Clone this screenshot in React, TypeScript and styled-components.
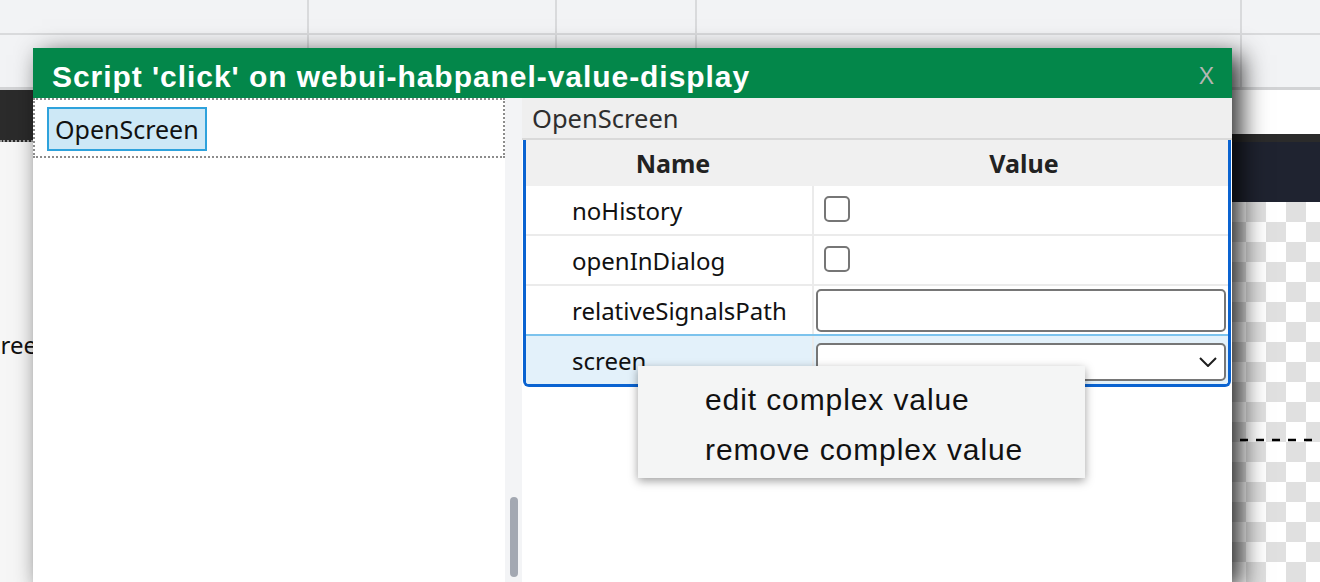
import React from "react";
import styled, { createGlobalStyle } from "styled-components";

const GlobalStyle = createGlobalStyle`
  html, body { margin: 0; padding: 0; }
  body {
    width: 1320px;
    height: 582px;
    overflow: hidden;
    background: #f6f6f6;
    font-family: "Noto Sans", "Liberation Sans", sans-serif;
  }
  * { box-sizing: border-box; }
`;

const Page = styled.div`
  position: relative;
  width: 1320px;
  height: 582px;
  overflow: hidden;
  display: flex;
  flex-direction: column;
`;

/* ---------- background application ---------- */

const TopGrid = styled.div`
  display: grid;
  grid-template-columns: 309px 248px 140px 545px 1fr;
  grid-template-rows: 35px 52px;
  background: #f2f3f5;
  border-bottom: 3px solid #d2d3d5;
  flex: none;
`;

const GridCell = styled.div<{ $top?: boolean; $last?: boolean }>`
  border-right: ${(p) => (p.$last ? "none" : "2px solid #d9dadc")};
  border-bottom: ${(p) => (p.$top ? "2px solid #d9dadc" : "none")};
`;

const Workspace = styled.div`
  flex: 1;
  display: flex;
  min-height: 0;
`;

const LeftPanel = styled.div`
  width: 640px;
  display: flex;
  flex-direction: column;
`;

const PanelBar = styled.div`
  height: 52px;
  background: #2b2b2b;
  border-bottom: 2px dotted #9a9a9a;
`;

const PanelList = styled.div`
  flex: 1;
  background: #f6f6f6;
  padding-top: 188px;
`;

const ListItem = styled.div`
  font-size: 24px;
  line-height: 30px;
  color: #111;
  margin-left: -86px;
  white-space: nowrap;
`;

const Canvas = styled.div`
  flex: 1;
  display: flex;
  flex-direction: column;
`;

const CanvasStrip = styled.div`
  height: 44px;
  background: #ffffff;
`;

const CanvasBar = styled.div`
  height: 68px;
  background: #1f2330;
  border-top: 8px solid #2b2b2b;
`;

const Checker = styled.div`
  position: relative;
  flex: 1;
  background: repeating-conic-gradient(#e0e0e0 0 25%, #ffffff 0 50%) 26px 0 / 40px 40px;
`;

const SelectionEdge = styled.svg`
  position: absolute;
  left: 440px;
  top: 236px;
`;

/* ---------- dialog ---------- */

const Dialog = styled.div`
  position: absolute;
  left: 33px;
  top: 48px;
  width: 1199px;
  height: 534px;
  display: flex;
  flex-direction: column;
  background: #ffffff;
  box-shadow: 9px 7px 24px rgba(0, 0, 0, 0.82);
`;

const TitleBar = styled.div`
  height: 50px;
  flex: none;
  background: #03874a;
  display: flex;
  align-items: flex-start;
  justify-content: space-between;
  padding: 7px 18px 0 19px;
`;

const Title = styled.div`
  font-family: "Liberation Sans", Arial, sans-serif;
  font-weight: bold;
  font-size: 30px;
  letter-spacing: 0.95px;
  line-height: 43px;
  color: #ffffff;
  white-space: nowrap;
`;

const Close = styled.div`
  font-family: "Liberation Sans", Arial, sans-serif;
  font-size: 23px;
  line-height: 43px;
  color: #b3b6b4;
`;

const DialogBody = styled.div`
  flex: 1;
  display: flex;
  min-height: 0;
`;

const TreePane = styled.div`
  width: 472px;
  flex: none;
  background: #ffffff;
`;

const TreeRow = styled.div`
  height: 60px;
  border: 2px dotted #8c8c8c;
  padding: 7px 12px;
`;

const Chip = styled.div`
  display: inline-block;
  height: 44px;
  padding: 0 6px;
  background: #cde8f6;
  border: 2px solid #2ea2dc;
  font-size: 25px;
  line-height: 40px;
  color: #111;
`;

const ScrollTrack = styled.div`
  width: 17px;
  flex: none;
  background: #f3f4f6;
  display: flex;
  flex-direction: column;
  justify-content: flex-end;
  align-items: center;
  padding-bottom: 5px;
`;

const Thumb = styled.div`
  width: 8px;
  height: 80px;
  border-radius: 4px;
  background: #a3a8b2;
  margin-left: 1px;
`;

const PropsPane = styled.div`
  flex: 1;
  display: flex;
  flex-direction: column;
  background: #ffffff;
`;

const PropsHeader = styled.div`
  height: 42px;
  flex: none;
  background: #efefef;
  border-bottom: 2px solid #d9d9d9;
  padding-left: 10px;
  font-size: 25.5px;
  line-height: 40px;
  color: #2e2e2e;
`;

const Table = styled.div`
  margin: 0 1px;
  border: 3px solid #0a63d1;
  border-top: none;
  border-radius: 0 0 6px 6px;
  overflow: hidden;
`;

const HeaderRow = styled.div`
  display: grid;
  grid-template-columns: 286px 1fr;
  height: 46px;
  background: #f0f0f0;
`;

const HeaderCell = styled.div`
  display: flex;
  align-items: center;
  justify-content: center;
  padding-left: 8px;
  font-size: 25px;
  font-weight: bold;
  color: #222;
`;

const Row = styled.div<{ $first?: boolean; $selected?: boolean }>`
  display: grid;
  grid-template-columns: 286px 1fr;
  height: ${(p) => (p.$first ? "48px" : "50px")};
  border-top: ${(p) =>
    p.$first ? "none" : p.$selected ? "2px solid #7cc3ed" : "2px solid #ebebeb"};
  background: ${(p) => (p.$selected ? "#e3f1fa" : "#ffffff")};
`;

const NameCell = styled.div`
  display: flex;
  align-items: center;
  padding-left: 46px;
  font-size: 24px;
  color: #111;
`;

const ValueCell = styled.div<{ $align?: "center" | "end" }>`
  display: flex;
  align-items: ${(p) => (p.$align === "end" ? "flex-end" : "center")};
  border-left: 2px solid #ebebeb;
  padding: 0 2px ${(p) => (p.$align === "end" ? "3px" : "0")};
`;

const Check = styled.input`
  appearance: none;
  width: 26px;
  height: 26px;
  margin: 0 0 2px 8px;
  border: 2px solid #767676;
  border-radius: 5px;
  background: #ffffff;
`;

const TextBox = styled.input`
  width: 100%;
  height: 43px;
  margin: 0;
  border: 2px solid #767676;
  border-radius: 5px;
  background: #ffffff;
`;

const SelectBox = styled.div`
  width: 100%;
  height: 38px;
  border: 2px solid #767676;
  border-radius: 5px;
  background: #ffffff;
  display: flex;
  align-items: center;
  justify-content: flex-end;
  padding-right: 7px;
`;

/* ---------- context menu ---------- */

const Menu = styled.div`
  position: absolute;
  left: 638px;
  top: 366px;
  width: 447px;
  height: 112px;
  padding-top: 9px;
  background: #f4f5f5;
  box-shadow: 0 3px 9px rgba(0, 0, 0, 0.38);
`;

const MenuItem = styled.div`
  padding-left: 67px;
  font-family: "Liberation Sans", Arial, sans-serif;
  font-size: 30px;
  letter-spacing: 0.9px;
  line-height: 50px;
  color: #111;
  white-space: nowrap;
`;

const Chevron = () => (
  <svg width="18" height="10" viewBox="0 0 18 10">
    <polyline points="1,1 9,9 17,1" fill="none" stroke="#1e1e1e" strokeWidth="2" />
  </svg>
);

const props = [
  { name: "noHistory", kind: "check" },
  { name: "openInDialog", kind: "check" },
  { name: "relativeSignalsPath", kind: "text" },
  { name: "screen", kind: "select" },
];

export default function App() {
  return (
    <>
      <GlobalStyle />
      <Page>
        <TopGrid>
          <GridCell $top />
          <GridCell $top />
          <GridCell $top />
          <GridCell $top />
          <GridCell $top $last />
          <GridCell />
          <GridCell />
          <GridCell />
          <GridCell />
          <GridCell $last />
        </TopGrid>
        <Workspace>
          <LeftPanel>
            <PanelBar />
            <PanelList>
              <ListItem>OpenScreen</ListItem>
            </PanelList>
          </LeftPanel>
          <Canvas>
            <CanvasStrip />
            <CanvasBar />
            <Checker>
              <SelectionEdge width="232" height="4" viewBox="0 0 232 4">
                <line x1="0" y1="2" x2="232" y2="2" stroke="#000" strokeWidth="2.5" strokeDasharray="8 8" />
              </SelectionEdge>
            </Checker>
          </Canvas>
        </Workspace>

        <Dialog>
          <TitleBar>
            <Title>Script 'click' on webui-habpanel-value-display</Title>
            <Close>X</Close>
          </TitleBar>
          <DialogBody>
            <TreePane>
              <TreeRow>
                <Chip>OpenScreen</Chip>
              </TreeRow>
            </TreePane>
            <ScrollTrack>
              <Thumb />
            </ScrollTrack>
            <PropsPane>
              <PropsHeader>OpenScreen</PropsHeader>
              <Table>
                <HeaderRow>
                  <HeaderCell>Name</HeaderCell>
                  <HeaderCell>Value</HeaderCell>
                </HeaderRow>
                {props.map((p, i) => (
                  <Row key={p.name} $first={i === 0} $selected={p.kind === "select"}>
                    <NameCell>{p.name}</NameCell>
                    {p.kind === "check" && (
                      <ValueCell>
                        <Check type="checkbox" readOnly />
                      </ValueCell>
                    )}
                    {p.kind === "text" && (
                      <ValueCell>
                        <TextBox type="text" readOnly />
                      </ValueCell>
                    )}
                    {p.kind === "select" && (
                      <ValueCell $align="end">
                        <SelectBox>
                          <Chevron />
                        </SelectBox>
                      </ValueCell>
                    )}
                  </Row>
                ))}
              </Table>
            </PropsPane>
          </DialogBody>
        </Dialog>

        <Menu>
          <MenuItem>edit complex value</MenuItem>
          <MenuItem>remove complex value</MenuItem>
        </Menu>
      </Page>
    </>
  );
}
